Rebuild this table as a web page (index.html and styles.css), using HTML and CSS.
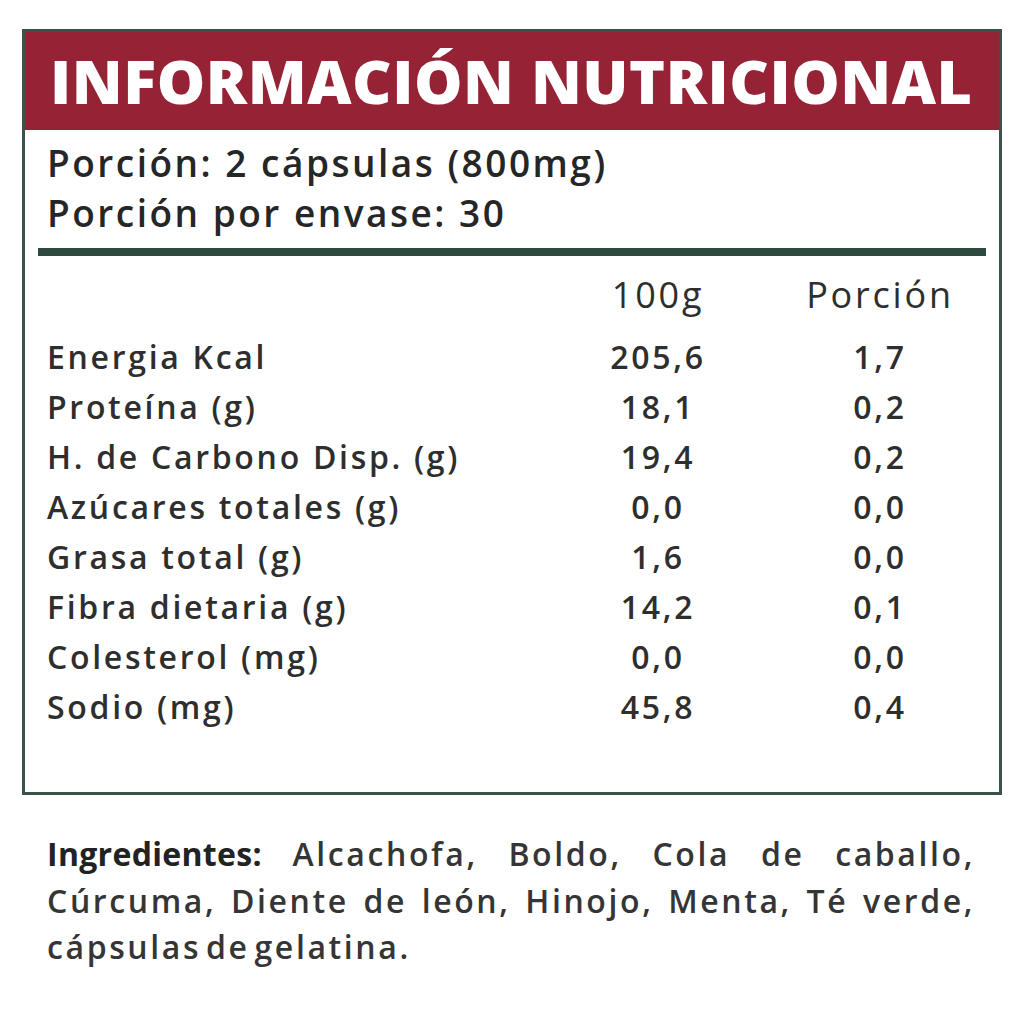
FILE: index.html
```html
<!DOCTYPE html>
<html lang="es">
<head>
<meta charset="utf-8">
<link rel="stylesheet" href="styles.css">
</head>
<body>
<div class="label">
  <div class="header">INFORMACIÓN NUTRICIONAL</div>
  <div class="serving">
    <div>Porción: 2 cápsulas (800mg)</div>
    <div>Porción por envase: 30</div>
  </div>
  <div class="rule"></div>
  <div class="table">
    <div class="row head"><span></span><span class="num">100g</span><span class="num">Porción</span></div>
    <div class="row"><span>Energia Kcal</span><span class="num">205,6</span><span class="num">1,7</span></div>
    <div class="row"><span>Proteína (g)</span><span class="num">18,1</span><span class="num">0,2</span></div>
    <div class="row"><span>H. de Carbono Disp. (g)</span><span class="num">19,4</span><span class="num">0,2</span></div>
    <div class="row"><span>Azúcares totales (g)</span><span class="num">0,0</span><span class="num">0,0</span></div>
    <div class="row"><span>Grasa total (g)</span><span class="num">1,6</span><span class="num">0,0</span></div>
    <div class="row"><span>Fibra dietaria (g)</span><span class="num">14,2</span><span class="num">0,1</span></div>
    <div class="row"><span>Colesterol (mg)</span><span class="num">0,0</span><span class="num">0,0</span></div>
    <div class="row"><span>Sodio (mg)</span><span class="num">45,8</span><span class="num">0,4</span></div>
  </div>
</div>
<div class="ingredients">
  <span class="line just"><b>Ingredientes:</b> Alcachofa, Boldo, Cola de caballo,</span>
  <span class="line just">Cúrcuma, Diente de león, Hinojo, Menta, Té verde,</span>
  <span class="line tight">cápsulas de gelatina.</span>
</div>
</body>
</html>
```
FILE: styles.css
```css
html, body {
  margin: 0;
  padding: 0;
  background: #ffffff;
}
body {
  font-family: "Open Sans", "DejaVu Sans", sans-serif;
  color: #2e2e2e;
}
.label {
  margin: 29px 0 0 22px;
  width: 974px;
  height: 760px;
  border: 3px solid #3b5247;
}
.header {
  background: #962335;
  color: #ffffff;
  font-weight: 800;
  font-size: 61px;
  line-height: 98px;
  height: 98px;
  padding-left: 25px;
  white-space: nowrap;
  letter-spacing: 0.55px;
}
.serving {
  padding: 8px 0 0 22px;
  font-size: 37px;
  font-weight: 600;
  line-height: 50px;
  letter-spacing: 2.5px;
  color: #262626;
}
.rule {
  margin: 10px 13px 0 13px;
  height: 8px;
  background: #2e4a3e;
}
.table {
  padding: 8px 0 0 22px;
  font-size: 32px;
  font-weight: 600;
  line-height: 50px;
  letter-spacing: 2.7px;
}
.row {
  display: grid;
  grid-template-columns: 511px 200px 244px;
  white-space: nowrap;
}
.row.head {
  font-size: 36px;
  font-weight: 400;
  line-height: 62px;
  margin-bottom: 6px;
  letter-spacing: 2.8px;
}
.num {
  text-align: center;
}
.ingredients {
  margin: 36px 0 0 47px;
  width: 928px;
  font-size: 32px;
  font-weight: 600;
  line-height: 46.5px;
  color: #353535;
  letter-spacing: 2.6px;
}
.line {
  display: block;
  white-space: nowrap;
}
.just {
  text-align: justify;
  text-align-last: justify;
  white-space: normal;
}
.ingredients b {
  font-weight: 700;
  color: #222222;
  letter-spacing: 0.3px;
}
.tight {
  word-spacing: -6px;
}
```
